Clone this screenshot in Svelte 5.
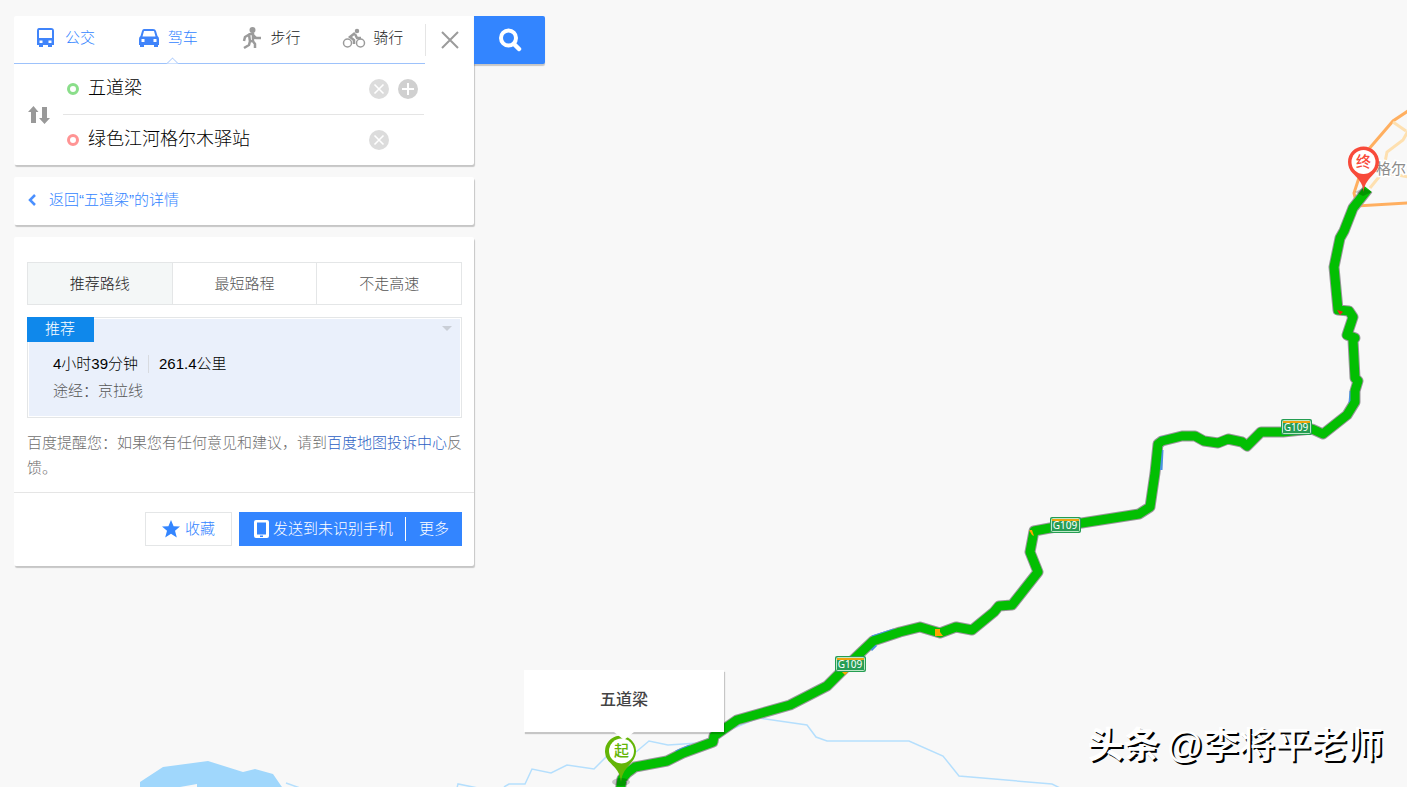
<script>
        const modes = [
                { id: 'bus', label: '公交', blue: true },
                { id: 'car', label: '驾车', blue: true },
                { id: 'walk', label: '步行', blue: false },
                { id: 'bike', label: '骑行', blue: false }
        ];

        const plans = ['推荐路线', '最短路程', '不走高速'];

        const road =
                '620,792 622,779 627,773 635,767 667,761 683,753 713,742 714,736 737,720 790,705 827,686 853,660 873,641 900,632 920,627 940,633 956,627 972,630 994,612 999,606 1012,605 1038,572 1030,552 1034,531 1050,528 1139,514 1150,507 1155,473 1158,444 1162,441 1182,436 1195,436 1204,441 1218,443 1228,439 1242,442 1247,446 1261,432 1283,432 1312,429 1323,434 1347,415 1355,402 1355,391 1358,381 1355,378 1353,340 1355,338 1347,335 1353,317 1349,311 1338,310 1334,267 1340,238 1344,231 1353,208 1368,189';

        const shields = [
                { x: 835, y: 656 },
                { x: 1050, y: 517 },
                { x: 1281, y: 419 }
        ];

        let mode = $state('car');
        let plan = $state(0);
        let from = $state('五道梁');
        let to = $state('绿色江河格尔木驿站');

        function swap() {
                [from, to] = [to, from];
        }
</script>

<svelte:head>
        <title>百度地图</title>
</svelte:head>

{#snippet clearIcon()}
        <svg width="20" height="20" viewBox="0 0 20 20"><circle cx="10" cy="10" r="10" fill="#dcdcdc" /><path d="M5.5 5.5l9 9m0-9l-9 9" stroke="#fff" stroke-width="1.6" /></svg>
{/snippet}

<div class="page">
        <!-- MAP -->
        <svg class="map" role="img" aria-label="路线地图">
                <path d="M140 782L163 767L208 761L243 772L255 769L273 774L284 790H140Z" fill="#a0d7fc" />
                <path d="M180 787L197 784V788Z" fill="#f8f8f8" />
                <g fill="none" stroke="#b5dffd" stroke-width="1.5">
                        <path d="M286 783l14 5M457 788l1-4l20 4M504 787l5-3h16l7-15l19 4l16-8l27 4l17-17" />
                        <path d="M636 752l13-11l19 4l30-2l60-25l49 7l9 12l11 4h82l34 15l16 20l93 8l8 4" />
                </g>
                <g fill="none">
                        <path d="M1408 203L1357 206L1354 193L1368 150L1393 121L1408 111" stroke="#ffaf60" stroke-width="3" />
                        <path d="M1393 122l13 9M1408 131l-5 9l-16 12l-4 20l-13 16M1382 172l26 5" stroke="#fee0b0" stroke-width="3" />
                </g>
                <text class="city" x="1376" y="174">格尔</text>

                <polyline points={road} fill="none" stroke="#9a969b" stroke-width="11" stroke-linejoin="round" />
                <g fill="none" stroke="#4c92df" stroke-width="3">
                        <path d="M676 752l14-6M872 637l22-7M876 645l-5 5M1161 470l1-20M1156 448l5-10l20-4M1350 403l1-12" />
                </g>
                <polyline points={road} fill="none" stroke="#02bf02" stroke-width="9" stroke-linejoin="round" />
                <g fill="#fea500">
                        <path d="M935 629h5v3l3 4h-8zM1029 530h3l2 6l-2-1zM841 671h8l-4 4z" />
                </g>
                <path d="M1337 310l4 1l2 1l-3 3z" fill="#ed2415" />

                {#each shields as s}
                        <g transform="translate({s.x} {s.y})">
                                <rect width="31" height="16" rx="2" fill="#259d52" />
                                <rect x="1.5" y="1.5" width="28" height="13" rx="1" fill="#279d54" stroke="#bce8c6" />
                                <path d="M2 3h27" stroke="#efa30c" stroke-width="2" />
                                <text class="shield" x="15" y="12">G109</text>
                        </g>
                {/each}

                <ellipse cx="621" cy="782" rx="9" ry="4" fill="#000" opacity=".2" />
                <path d="M621 782C620 772 616 769 610.5 763A15.5 15.5 0 1 1 632.500 761C627 768 622 772 621 782Z" fill="#63b506" />
                <circle cx="621.5" cy="751" r="12.500" fill="#fff" />
                <text class="pin start" x="621.5" y="756">起</text>

                <path d="M1355 192l8-4l9 4l-9 4z" fill="#000" opacity=".22" />
                <path d="M1363.500 192C1363 182 1357 178 1352.500 173A15.500 15.500 0 1 1 1374.500 173C1369 179 1364.500 183 1363.500 192Z" fill="#f84a3a" />
                <circle cx="1363.500" cy="162" r="12" fill="#fff" />
                <text class="pin end" x="1363.500" y="167">终</text>
        </svg>

        <div class="callout">五道梁</div>
        <div class="watermark"><b>头条</b><span>@李将平老师</span></div>

        <!-- SIDE PANEL -->
        <div class="side">
                <div class="top">
                        <form class="card search-card" onsubmit={(e) => e.preventDefault()}>
                                <div class="mode-bar">
                                        <div class="modes">
                                                {#each modes as m}
                                                        <button type="button" class="mode" class:blue={m.blue} class:active={mode === m.id} onclick={() => (mode = m.id)}>
                                                                {#if m.id === 'bus'}
                                                                        <svg width="24" height="24" viewBox="0 0 24 24"><path fill="#4084fa" fill-rule="evenodd" d="M5 2h12q3 0 3 3v14h-2v2h-4v-2H9v2H5v-2H3V5q0-3 2-3zM5 4v8h13V4zM5.500 14.500v2.500h3V14.500zM14.500 14.500v2.500h3V14.500z" /></svg>
                                                                {:else if m.id === 'car'}
                                                                        <svg width="24" height="24" viewBox="0 0 24 24"><path fill="#4084fa" fill-rule="evenodd" d="M7 3h9q2.500 0 3 2l1.500 5q1.500 1 1.500 3v6h-1v2h-4v-2H7v2H3v-2H2v-6q0-2 1.500-3L5 5Q5.500 3 7 3zM7 5l-1.500 5.500h13L17 5zM4.500 13v3h3v-3zM16.500 13v3h3v-3z" /></svg>
                                                                {:else if m.id === 'walk'}
                                                                        <svg width="24" height="24" viewBox="0 0 24 24" fill="none" stroke="#9b9b9b" stroke-width="2.500" stroke-linejoin="round"><circle cx="12.500" cy="4" r="3" fill="#9b9b9b" stroke="none" /><path d="M9 8.500l4-1v7l-3 1zM10 8l-5 3l-1 4M13 9l3 3h5M10 15l-1 4l-5 3M12 14l3 4v4" /></svg>
                                                                {:else}
                                                                        <svg width="24" height="24" viewBox="0 0 24 24" fill="none" stroke="#9b9b9b" stroke-width="1.500"><circle cx="5.500" cy="17" r="4" /><circle cx="18.500" cy="17" r="4" /><circle cx="15" cy="5" r="1.500" fill="#9b9b9b" /><path d="M13 7l-5 4l4 3v4M13 8l2 4h4" stroke-width="2.500" /></svg>
                                                                {/if}
                                                                {m.label}
                                                        </button>
                                                {/each}
                                        </div>
                                        <button type="button" class="close" aria-label="关闭">
                                                <svg width="20" height="20" viewBox="0 0 20 20"><path d="M2 2l16 16M18 2L2 18" stroke="#9b9b9b" stroke-width="2" /></svg>
                                        </button>
                                </div>
                                <div class="places">
                                        <button type="button" class="swap" aria-label="交换起终点" onclick={swap}>
                                                <svg width="22" height="18" viewBox="0 0 22 18"><path d="M5.500 0l5 6H8v11H3V6H0zM16.500 18l-5.500-6h3V1h5v11h3z" fill="#999" /></svg>
                                        </button>
                                        <div class="fields">
                                                <div class="field">
                                                        <span class="dot"></span>
                                                        <input type="text" aria-label="起点" bind:value={from} />
                                                        <button type="button" aria-label="清除起点" onclick={() => (from = '')}>{@render clearIcon()}</button>
                                                        <button type="button" aria-label="添加途经点">
                                                                <svg width="20" height="20" viewBox="0 0 20 20"><circle cx="10" cy="10" r="10" fill="#d0d0d0" /><path d="M10 4v12M4 10h12" stroke="#fff" stroke-width="2" /></svg>
                                                        </button>
                                                </div>
                                                <div class="field">
                                                        <span class="dot red"></span>
                                                        <input type="text" aria-label="终点" bind:value={to} />
                                                        <button type="button" class="last" aria-label="清除终点" onclick={() => (to = '')}>{@render clearIcon()}</button>
                                                </div>
                                        </div>
                                </div>
                        </form>
                        <button type="button" class="search" aria-label="搜索">
                                <svg width="24" height="24" viewBox="0 0 24 24" fill="none" stroke="#fff"><circle cx="10.500" cy="10" r="7.500" stroke-width="4" /><path d="M16 16l5 5" stroke-width="4.500" stroke-linecap="round" /></svg>
                        </button>
                </div>

                <div class="card back-card">
                        <a href="#detail">
                                <svg width="8" height="12" viewBox="0 0 8 12"><path d="M7 1L2 6l5 5" fill="none" stroke="#4a90ff" stroke-width="2.500" /></svg>
                                返回“五道梁”的详情
                        </a>
                </div>

                <div class="card result">
                        <div class="plans">
                                {#each plans as p, i}
                                        <button type="button" class:active={plan === i} onclick={() => (plan = i)}>{p}</button>
                                {/each}
                        </div>

                        <div class="route">
                                <div class="route-head">
                                        <span class="tag">推荐</span>
                                        <svg width="10" height="5" viewBox="0 0 10 5"><path d="M0 0h10L5 5z" fill="#c9ced6" /></svg>
                                </div>
                                <div class="route-body">
                                        <p class="cost"><span>4小时39分钟</span><span>261.4公里</span></p>
                                        <p class="via">途经：京拉线</p>
                                </div>
                        </div>

                        <p class="tip">百度提醒您：如果您有任何意见和建议，请到<a href="#feedback">百度地图投诉中心</a>反馈。</p>

                        <div class="actions">
                                <button type="button" class="fav">
                                        <svg width="18" height="18" viewBox="0 0 18 18"><path d="M9 0l2.600 6.200l6.400.4l-5 4.200l1.800 6.700L9 13.800l-5.800 3.700L5 10.800L0 6.600l6.400-.4z" fill="#3385ff" /></svg>
                                        收藏
                                </button>
                                <div class="send">
                                        <button type="button" class="phone">
                                                <svg width="15" height="18" viewBox="0 0 15 18"><path fill="#fff" fill-rule="evenodd" d="M2 0h11q2 0 2 2v14q0 2-2 2H2q-2 0-2-2V2Q0 0 2 0zM3 2.500v12h9v-12zM6 15.500v1.500h3v-1.500z" /></svg>
                                                发送到未识别手机
                                        </button>
                                        <button type="button" class="more">更多</button>
                                </div>
                        </div>
                </div>
        </div>
</div>

<style>
        :global(body) {
                margin: 0;
                background: #f8f8f8;
        }

        .page {
                position: relative;
                min-height: 100vh;
                overflow: hidden;
                box-sizing: border-box;
                padding: 16px 14px;
                font: 300 15px/24px 'Liberation Sans', 'Noto Sans CJK SC', sans-serif;
                color: #222;
        }

        button {
                display: flex;
                align-items: center;
                justify-content: center;
                padding: 0;
                border: 0;
                background: none;
                font: inherit;
                color: inherit;
                cursor: pointer;
        }

        a {
                color: #3385ff;
                text-decoration: none;
        }
        p { margin: 0; }
        svg { flex: none; }

        /* map */
        .map {
                position: absolute;
                inset: 0;
                width: 100%;
                height: 100%;
        }
        .city {
                font-size: 15px;
                font-weight: 400;
                fill: #8c8c8c;
                stroke: #fff;
                stroke-width: 3px;
                paint-order: stroke;
        }
        .shield {
                font: 10px 'Noto Sans', sans-serif;
                fill: #fff;
                text-anchor: middle;
        }
        .pin {
                font-size: 15px;
                font-weight: 500;
                text-anchor: middle;
        }
        .start { fill: #63b506; }
        .end { fill: #f84a3a; }

        .callout {
                position: absolute;
                left: 524px;
                top: 670px;
                width: 200px;
                padding: 18px 0 20px;
                text-align: center;
                font-size: 16px;
                font-weight: 500;
                color: #444;
                background: #fff;
                box-shadow: 1px 2px 1px rgba(0, 0, 0, 0.2);
        }
        .callout::after {
                content: '';
                position: absolute;
                left: 90px;
                top: 100%;
                border: 10px solid transparent;
                border-top: 8px solid #fff;
                border-bottom: 0;
        }

        .watermark {
                position: absolute;
                right: 24px;
                bottom: 17px;
                display: flex;
                gap: 7px;
                font-size: 36px;
                line-height: 48px;
                font-weight: 500;
                color: #fff;
                text-shadow: 2px 2px 0 #000;
        }

        /* side panel */
        .side {
                position: relative;
                display: flex;
                flex-direction: column;
                align-items: flex-start;
                gap: 12px;
                width: 531px;
                max-width: 100%;
        }
        .top {
                display: flex;
                align-items: flex-start;
                width: 100%;
        }
        .card {
                width: 460px;
                background: #fff;
                border-radius: 2px;
                box-shadow: 1px 2px 1px rgba(0, 0, 0, 0.2);
        }
        .search {
                flex: 1;
                height: 48px;
                background: #3385ff;
                border-radius: 0 2px 2px 0;
                box-shadow: 0 2px 1px rgba(0, 0, 0, 0.2);
        }

        .mode-bar { display: flex; }
        .modes {
                flex: 1;
                display: flex;
                border-bottom: 1px solid #9dc2fb;
        }
        .mode {
                position: relative;
                flex: 1;
                justify-content: flex-start;
                gap: 7px;
                height: 47px;
                padding-left: 20px;
                padding-bottom: 3px;
        }
        .mode.blue { color: #3385ff; }
        .mode.active::after {
                content: '';
                position: absolute;
                left: 51px;
                bottom: -5px;
                width: 8px;
                height: 8px;
                border: solid #9dc2fb;
                border-width: 1px 0 0 1px;
                background: #fff;
                transform: rotate(45deg);
                clip-path: polygon(0 0, 100% 0, 0 100%);
        }
        .close {
                width: 49px;
                height: 32px;
                margin-top: 8px;
                border-left: 1px solid #e5e5e5;
        }

        .places { display: flex; }
        .swap { width: 49px; }
        .fields {
                flex: 1;
                margin-right: 50px;
        }
        .field {
                display: flex;
                align-items: center;
                height: 50px;
                padding: 0 6px 0 4px;
        }
        .field + .field { border-top: 1px solid #e5e5e5; }
        .field button + button { margin-left: 9px; }
        .last { margin-right: 29px; }
        .dot {
                width: 6px;
                height: 6px;
                border: 3px solid #8ade8a;
                border-radius: 50%;
        }
        .dot.red { border-color: #ff9494; }
        input {
                flex: 1;
                min-width: 0;
                margin-left: 9px;
                padding: 0 0 2px;
                border: 0;
                outline: 0;
                background: none;
                font: inherit;
                font-size: 18px;
                color: #000;
        }

        .back-card a {
                display: flex;
                align-items: center;
                gap: 13px;
                padding: 11px 14px 13px;
        }

        .result {
                padding: 25px 0 20px;
        }
        .plans,
        .route {
                margin: 0 12px 0 13px;
        }
        .plans {
                display: flex;
                border: 1px solid #e4e6e7;
        }
        .plans button {
                flex: 1;
                height: 41px;
                color: #555;
        }
        .plans button + button { border-left: 1px solid #e4e6e7; }
        .plans .active {
                background: #f4f7f7;
                color: #222;
        }

        .route {
                margin-top: 12px;
                border: 1px solid #e4e6e7;
                padding: 1px;
                background: #eaf0fb content-box;
        }
        .route-head {
                display: flex;
                justify-content: space-between;
                padding-right: 8px;
        }
        .route-head svg { margin-top: 7px; }
        .tag {
                margin: -2px 0 0 -2px;
                padding: 0 19px 1px 18px;
                background: #0f88eb;
                color: #fff;
        }
        .route-body {
                padding: 8px 24px 12px;
                line-height: 27px;
        }
        .cost {
                display: flex;
                align-items: center;
                height: 27px;
                color: #000;
        }
        .cost span { line-height: 18px; }
        .cost span + span {
                margin-left: 10px;
                padding-left: 10px;
                border-left: 1px solid #d8dbe0;
        }
        .via { color: #555; }

        .tip {
                margin: 12px 10px 0 13px;
                line-height: 25px;
                color: #707070;
        }
        .tip a { color: #2d5fc4; }

        .actions {
                display: flex;
                justify-content: flex-end;
                gap: 7px;
                margin-top: 12px;
                padding: 19px 12px 0;
                border-top: 1px solid #e5e5e5;
        }
        .fav {
                gap: 5px;
                height: 34px;
                padding: 0 16px;
                border: 1px solid #e4e6e7;
                color: #3385ff;
        }
        .send {
                display: flex;
                align-items: center;
                height: 34px;
                background: #3385ff;
                color: #fff;
        }
        .phone {
                gap: 4px;
                padding: 0 12px 0 15px;
        }
        .more {
                padding: 0 13px;
                border-left: 1px solid #fff;
        }
</style>
